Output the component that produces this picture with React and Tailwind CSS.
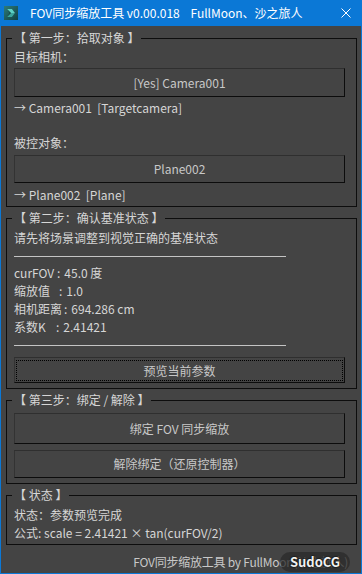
import React from "react";

const F = "font-['Noto_Sans_CJK_SC',sans-serif]";

function Btn({ cls, children, focus }) {
  return (
    <div
      className={
        "flex border-t border-l border-r border-b border-t-[#2f2f2f] border-l-[#333333] border-r-[#0c0c0c] border-b-[#0c0c0c] bg-[#444444] text-[#c8c8c8] " +
        cls
      }
    >
      {focus ? (
        <div className="flex flex-1 pt-[2px] pl-[1px] pr-[1px] pb-[1px]">
          <div className="flex flex-1 items-center justify-center border border-dotted border-black leading-[16px]">
            {children}
          </div>
        </div>
      ) : (
        <div className="flex flex-1 items-center justify-center leading-[16px]">{children}</div>
      )}
    </div>
  );
}

function Group({ title, cls, children }) {
  return (
    <fieldset className={"min-w-0 border border-[#0d0d0d] pl-[7px] pr-[11px] " + cls}>
      <legend className="-ml-[2px] px-[2px] leading-[16px] whitespace-pre text-[#d6d6d6]">{title}</legend>
      {children}
    </fieldset>
  );
}

function Row({ children, cls = "" }) {
  return <div className={"h-[18px] leading-[18px] whitespace-pre " + cls}>{children}</div>;
}

function Param({ w, label, value }) {
  return (
    <Row>
      <span className={"inline-block " + w}>{label}</span>
      <span>:</span>
      <span className="ml-[4px]">{value}</span>
    </Row>
  );
}

export default function App() {
  return (
    <div className={"flex h-[574px] w-[362px] flex-col bg-[#0b78d6] px-px pb-px text-[12px] " + F}>
      {/* title bar */}
      <div className="flex h-[26px] shrink-0 items-center text-white">
        <svg width="14" height="14" viewBox="0 0 14 14" className="ml-[3px] mr-[12px]">
          <defs>
            <linearGradient id="ig" x1="0" y1="0" x2="1" y2="1">
              <stop offset="0" stopColor="#2d7c7a" />
              <stop offset="1" stopColor="#0f3f42" />
            </linearGradient>
          </defs>
          <rect x="0" y="0" width="14" height="14" fill="url(#ig)" />
          <polygon points="3,3 8,3 11,7 8,11 3,11 6,7" fill="#0d2f31" />
          <polygon points="3,3 8,3 11,7 7,7" fill="#5cd0c4" />
          <polygon points="7,7 11,7 8,11 3,11" fill="#3aa39b" />
        </svg>
        <span className="whitespace-pre leading-[16px]">FOV同步缩放工具 v0.00.018    FullMoon、沙之旅人</span>
        <div className="flex-1" />
        <svg width="10" height="10" viewBox="0 0 10 10" className="mr-[10px]">
          <path d="M0.5 0.5 L9.5 9.5 M9.5 0.5 L0.5 9.5" stroke="#ffffff" strokeWidth="1" />
        </svg>
      </div>

      {/* body */}
      <div className="flex flex-1 flex-col bg-[#444444] pl-[5px] pr-[4px] pt-[4px] text-[#d6d6d6]">
        <Group title="【 第一步：拾取对象 】" cls="pt-[2px] pb-[2px]">
          <Row>目标相机：</Row>
          <Btn cls="mt-[2px] h-[29px]">[Yes] Camera001</Btn>
          <Row cls="mt-[2px]">{"→ Camera001  [Targetcamera]"}</Row>
          <Row cls="mt-[17px]">被控对象：</Row>
          <Btn cls="mt-[3px] h-[28px]">Plane002</Btn>
          <Row cls="mt-[3px]">{"→ Plane002  [Plane]"}</Row>
        </Group>

        <Group title="【 第二步：确认基准状态 】" cls="mt-[3px] pt-[3px] pb-[5px]">
          <Row>请先将场景调整到视觉正确的基准状态</Row>
          <div className="mt-[9px] h-px w-[272px] bg-[#c4c4c4]" />
          <div className="mt-[7px]">
            <Param w="w-[43px]" label="curFOV" value="45.0 度" />
            <Param w="w-[45px]" label="缩放值" value="1.0" />
            <Param w="w-[50px]" label="相机距离" value="694.286 cm" />
            <Param w="w-[42px]" label="系数K" value="2.41421" />
          </div>
          <div className="mt-[9px] h-px w-[272px] bg-[#c4c4c4]" />
          <Btn cls="mt-[11px] h-[26px]" focus>
            预览当前参数
          </Btn>
        </Group>

        <Group title="【 第三步：绑定 / 解除 】" cls="mt-[3px] pb-[5px]">
          <Btn cls="mt-[5px] h-[31px]">绑定 FOV 同步缩放</Btn>
          <Btn cls="mt-[6px] h-[28px]">解除绑定（还原控制器）</Btn>
        </Group>

        <Group title="【 状态 】" cls="mt-[3px] pt-[3px] pb-[2px]">
          <Row>状态：参数预览完成</Row>
          <Row>公式: scale = 2.41421 × tan(curFOV/2)</Row>
        </Group>

        <div className="relative mr-[9px] mt-[8px] flex h-[18px] justify-end">
          <span className="leading-[18px] tracking-[-0.25px] text-[#c8c8c8]">FOV同步缩放工具 by FullMoon(沙之旅人)</span>
          <div className="absolute -right-[2px] -top-[1px] flex h-[20px] w-[70px] items-center justify-center rounded-full bg-[#2a2a2a]/75">
            <span className="text-[13px] font-bold leading-[16px] text-[#f0f0f0] [text-shadow:0_0_2px_#000,0_0_1px_#000]">
              SudoCG
            </span>
          </div>
        </div>
      </div>
    </div>
  );
}
